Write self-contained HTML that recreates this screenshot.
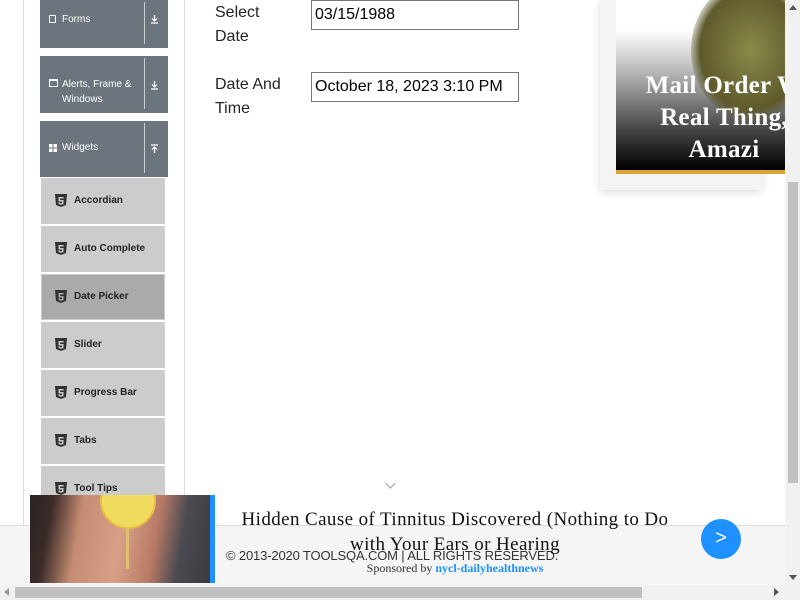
<!DOCTYPE html>
<html><head><style>
*{margin:0;padding:0;box-sizing:border-box}
body{width:800px;height:600px;overflow:hidden;background:#fff;font-family:"Liberation Sans",sans-serif;position:relative}
.a{position:absolute}
.grp{position:absolute;left:40px;width:128px;background:#6c757d;color:#fff;font-size:10px}
.grp .dv{position:absolute;left:104px;top:2px;bottom:4px;width:1px;background:#c9ccd0}
.grp .ar{position:absolute;left:110px}
.grp .ic{position:absolute;left:9px}
.it{position:absolute;left:41px;width:124px;height:46px;background:#ccc;font-size:10px;font-weight:bold;color:#222}
.it span{position:absolute;left:33px;top:17px}
.it svg{position:absolute;left:14px;top:16px}
</style></head><body>
<div class="a" style="left:23px;top:0;width:1px;height:526px;background:#ddd"></div>
<div class="a" style="left:184px;top:0;width:1px;height:526px;background:#ddd"></div>

<div class="grp" style="top:0;height:48px"><div class="ic" style="top:15px;width:7px;height:8px;border:1px solid #fff;border-radius:1px"></div><span class="a" style="left:22px;top:14px">Forms</span><div class="dv"></div><svg class="ar" style="top:14px" width="9" height="10"><path d="M4.5 1V7M2 4.5L4.5 7L7 4.5M1 9H8" stroke="#fff" stroke-width="1.2" fill="none"/></svg></div>
<div class="grp" style="top:56px;height:57px"><div class="ic" style="top:23px;width:9px;height:8px;border:1px solid #fff;border-top-width:2px"></div><span class="a" style="left:22px;top:21px;line-height:15px">Alerts, Frame &amp;<br>Windows</span><div class="dv"></div><svg class="ar" style="top:24px" width="9" height="10"><path d="M4.5 1V7M2 4.5L4.5 7L7 4.5M1 9H8" stroke="#fff" stroke-width="1.2" fill="none"/></svg></div>
<div class="grp" style="top:121px;height:56px"><svg class="ic" style="top:23px" width="8" height="8"><rect x="0" y="0" width="3.5" height="3.5" fill="#fff"/><rect x="4.5" y="0" width="3.5" height="3.5" fill="#fff"/><rect x="0" y="4.5" width="3.5" height="3.5" fill="#fff"/><rect x="4.5" y="4.5" width="3.5" height="3.5" fill="#fff"/></svg><span class="a" style="left:22px;top:21px">Widgets</span><div class="dv"></div><svg class="ar" style="top:23px" width="9" height="10"><path d="M4.5 9V3M2 5.5L4.5 3L7 5.5M1 1H8" stroke="#fff" stroke-width="1.2" fill="none"/></svg></div>

<div class="it" style="top:178px"><svg width="12" height="13" viewBox="0 0 12 13"><path d="M0 0H12L11 11L6 13L1 11Z" fill="#333"/><path d="M3.5 3H8.5V4.5H5V6H8.5V10L6 10.8L3.5 10V8.5H5V9.3L7 9V7.5H3.5Z" fill="#ccc"/></svg><span>Accordian</span></div>
<div class="it" style="top:226px"><svg width="12" height="13" viewBox="0 0 12 13"><path d="M0 0H12L11 11L6 13L1 11Z" fill="#333"/><path d="M3.5 3H8.5V4.5H5V6H8.5V10L6 10.8L3.5 10V8.5H5V9.3L7 9V7.5H3.5Z" fill="#ccc"/></svg><span>Auto Complete</span></div>
<div class="it" style="top:274px;background:#aaa;border:1px solid #c8ccd0"><svg width="12" height="13" viewBox="0 0 12 13" style="left:13px;top:15px"><path d="M0 0H12L11 11L6 13L1 11Z" fill="#333"/><path d="M3.5 3H8.5V4.5H5V6H8.5V10L6 10.8L3.5 10V8.5H5V9.3L7 9V7.5H3.5Z" fill="#aaa"/></svg><span style="left:32px;top:16px">Date Picker</span></div>
<div class="it" style="top:322px"><svg width="12" height="13" viewBox="0 0 12 13"><path d="M0 0H12L11 11L6 13L1 11Z" fill="#333"/><path d="M3.5 3H8.5V4.5H5V6H8.5V10L6 10.8L3.5 10V8.5H5V9.3L7 9V7.5H3.5Z" fill="#ccc"/></svg><span>Slider</span></div>
<div class="it" style="top:370px"><svg width="12" height="13" viewBox="0 0 12 13"><path d="M0 0H12L11 11L6 13L1 11Z" fill="#333"/><path d="M3.5 3H8.5V4.5H5V6H8.5V10L6 10.8L3.5 10V8.5H5V9.3L7 9V7.5H3.5Z" fill="#ccc"/></svg><span>Progress Bar</span></div>
<div class="it" style="top:418px"><svg width="12" height="13" viewBox="0 0 12 13"><path d="M0 0H12L11 11L6 13L1 11Z" fill="#333"/><path d="M3.5 3H8.5V4.5H5V6H8.5V10L6 10.8L3.5 10V8.5H5V9.3L7 9V7.5H3.5Z" fill="#ccc"/></svg><span>Tabs</span></div>
<div class="it" style="top:466px;height:60px"><svg width="12" height="13" viewBox="0 0 12 13"><path d="M0 0H12L11 11L6 13L1 11Z" fill="#333"/><path d="M3.5 3H8.5V4.5H5V6H8.5V10L6 10.8L3.5 10V8.5H5V9.3L7 9V7.5H3.5Z" fill="#ccc"/></svg><span>Tool Tips</span></div>

<div class="a" style="left:215px;top:1px;font-size:16px;color:#212529;line-height:24px">Select<br>Date</div>
<div class="a" style="left:311px;top:0;width:208px;height:30px;border:1px solid #767676;font-size:16px;padding:5px 3px;color:#000">03/15/1988</div>
<div class="a" style="left:215px;top:73px;font-size:16px;color:#212529;line-height:24px">Date And<br>Time</div>
<div class="a" style="left:311px;top:72px;width:208px;height:30px;border:1px solid #767676;font-size:16px;padding:5px 3px;color:#000">October 18, 2023 3:10 PM</div>

<div class="a" style="left:600px;top:0;width:162px;height:190px;background:#f4f4f4;box-shadow:0 2px 8px rgba(0,0,0,.15)"></div>
<div class="a" style="left:616px;top:0;width:170px;height:170px;overflow:hidden;background:linear-gradient(#fff 0,#fff 30px,#bbb 70px,#444 130px,#000 170px)">
<div class="a" style="left:75px;top:-20px;width:120px;height:140px;border-radius:50%;background:radial-gradient(#8a8a4a,#5e5a2c 60%,rgba(80,80,40,0) 75%)"></div>
<div class="a" style="left:0;top:70px;width:216px;text-align:center;color:#fff;font:bold 25px/32px 'Liberation Serif',serif;letter-spacing:.3px">Mail Order W<br>Real Thing, <br>Amazi</div>
</div>
<div class="a" style="left:616px;top:170px;width:170px;height:4px;background:#dba333"></div>

<div class="a" style="left:386px;top:479px;width:9px;height:9px;border-right:1px solid #888;border-bottom:1px solid #888;transform:rotate(45deg) scale(.8)"></div>

<div class="a" style="left:0;top:525px;width:785px;height:60px;background:#f5f5f5;border-top:1px solid #ddd"></div>
<div class="a" style="left:226px;top:548px;font-size:13px;color:#333;letter-spacing:-0.15px">© 2013-2020 TOOLSQA.COM | ALL RIGHTS RESERVED.</div>

<div class="a" style="left:30px;top:495px;width:180px;height:88px;overflow:hidden;background:linear-gradient(100deg,#2a2225 0,#3a2a28 12%,#c48c72 28%,#d9a088 50%,#b87a66 68%,#4a4a50 82%,#3a3a40 100%)">
<div class="a" style="left:70px;top:-22px;width:56px;height:56px;border-radius:50%;background:#f2dc60;border:2px solid #e8c040"></div>
<div class="a" style="left:96px;top:34px;width:3px;height:40px;background:#e0c070"></div>
</div>
<div class="a" style="left:210px;top:495px;width:5px;height:88px;background:#1e90ff"></div>
<div class="a" style="left:215px;top:507px;width:480px;text-align:center;font:19px/25px 'Liberation Serif',serif;letter-spacing:.4px;color:#111;white-space:nowrap">Hidden Cause of Tinnitus Discovered (Nothing to Do<br>with Your Ears or Hearing</div>
<div class="a" style="left:225px;top:561px;width:460px;text-align:center;font:12px 'Liberation Serif',serif;color:#333">Sponsored by <span style="color:#1e90ff;font-weight:bold">nycl-dailyhealthnews</span></div>
<div class="a" style="left:701px;top:519px;width:40px;height:40px;border-radius:50%;background:#1e90ff;color:#fff;font-size:20px;text-align:center;line-height:38px">&gt;</div>

<div class="a" style="left:785px;top:0;width:15px;height:585px;background:#f1f1f1"></div>
<div class="a" style="left:788px;top:182px;width:10px;height:301px;background:#c1c1c1"></div>
<div class="a" style="left:789px;top:5px;width:0;height:0;border:4px solid transparent;border-bottom:5px solid #555;border-top:0"></div>
<div class="a" style="left:789px;top:575px;width:0;height:0;border:4px solid transparent;border-top:5px solid #555;border-bottom:0"></div>
<div class="a" style="left:0;top:585px;width:800px;height:15px;background:#f1f1f1"></div>
<div class="a" style="left:15px;top:587px;width:627px;height:11px;background:#c1c1c1"></div>
<div class="a" style="left:4px;top:588px;width:0;height:0;border:4px solid transparent;border-right:5px solid #999;border-left:0"></div>
<div class="a" style="left:774px;top:588px;width:0;height:0;border:4px solid transparent;border-left:5px solid #555;border-right:0"></div>
</body></html>
